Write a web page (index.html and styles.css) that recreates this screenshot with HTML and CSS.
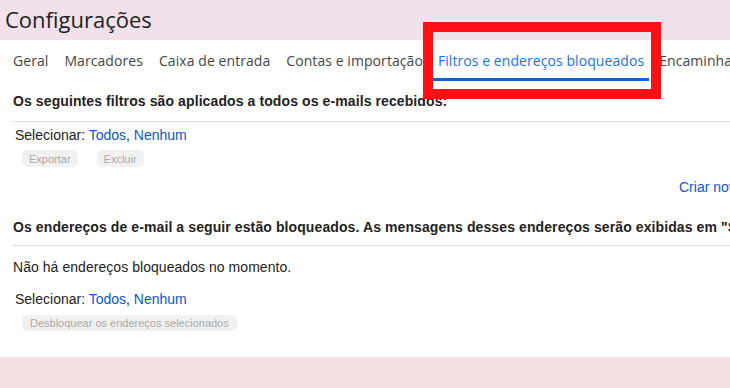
FILE: index.html
```html
<!DOCTYPE html>
<html lang="pt-BR">
<head>
<meta charset="utf-8">
<title>Configurações</title>
<link rel="stylesheet" href="styles.css">
</head>
<body>
<div class="page">
  <header class="topbar">
    <h1 class="title">Configurações</h1>
  </header>
  <main class="panel">
    <nav class="tabs">
      <a class="tab">Geral</a>
      <a class="tab">Marcadores</a>
      <a class="tab">Caixa de entrada</a>
      <a class="tab">Contas e importação</a>
      <a class="tab tab-active">Filtros e endereços bloqueados</a>
      <a class="tab">Encaminhamento e POP/IMAP</a>
    </nav>
    <section class="section">
      <h2 class="sec-title">Os seguintes filtros são aplicados a todos os e-mails recebidos:</h2>
      <div class="select-row">Selecionar: <a class="link">Todos</a>, <a class="link">Nenhum</a></div>
      <div class="btn-row">
        <span class="btn">Exportar</span>
        <span class="btn">Excluir</span>
      </div>
      <div class="create-row"><a class="link">Criar novo filtro</a> &nbsp; <a class="link">Importar filtros</a></div>
    </section>
    <section class="section section-blocked">
      <h2 class="sec-title sec-title-2">Os endereços de e-mail a seguir estão bloqueados. As mensagens desses endereços serão exibidas em "Spam":</h2>
      <p class="empty">Não há endereços bloqueados no momento.</p>
      <div class="select-row select-row-2">Selecionar: <a class="link">Todos</a>, <a class="link">Nenhum</a></div>
      <div class="btn-row btn-row-2">
        <span class="btn">Desbloquear os endereços selecionados</span>
      </div>
    </section>
  </main>
  <footer class="bottom"></footer>
  <div class="highlight"></div>
</div>
</body>
</html>
```

FILE: styles.css
```css
html, body {
  margin: 0;
  padding: 0;
  background: #ffffff;
  overflow: hidden;
}
body {
  width: 730px;
  height: 388px;
  font-family: "Liberation Sans", Arial, sans-serif;
  color: #202124;
}
.page {
  position: relative;
  width: 730px;
  height: 388px;
  overflow: hidden;
}
.topbar {
  height: 40px;
  background: #f0e1eb;
  display: flex;
  align-items: center;
  padding-left: 5px;
}
.title {
  margin: 0;
  font-family: "Open Sans", sans-serif;
  font-weight: 400;
  font-size: 22px;
  line-height: 28px;
  color: #1f1f1f;
  padding-bottom: 3px;
}
.panel {
  height: 317px;
  background: #ffffff;
}
.tabs {
  display: flex;
  height: 41px;
  padding-left: 5px;
  white-space: nowrap;
}
.tab {
  display: flex;
  align-items: center;
  padding: 2px 8px 0;
  font-family: "Open Sans", sans-serif;
  font-size: 14px;
  letter-spacing: 0.07px;
  color: #444746;
  border-bottom: 3px solid transparent;
}
.tab-active {
  color: #1a73e8;
  border-bottom-color: #0b66de;
  padding-left: 7px;
  padding-right: 5px;
  margin-right: 5px;
}
.tab-active + .tab {
  padding-left: 5px;
}
.section {
  padding-left: 13px;
  white-space: nowrap;
}
.sec-title {
  margin: 0;
  padding: 10px 0;
  font-size: 14px;
  line-height: 20px;
  font-weight: 700;
  color: #222;
  border-bottom: 1px solid #dedede;
  letter-spacing: 0.1px;
}
.select-row {
  padding-left: 2px;
  margin-top: 3px;
  font-size: 14px;
  line-height: 20px;
  color: #222;
}
.link {
  color: #0b57d0;
}
.btn-row {
  display: flex;
  gap: 19px;
  margin-top: 5px;
  padding-left: 9px;
}
.btn {
  display: inline-flex;
  align-items: center;
  height: 17px;
  padding: 0 7px;
  background: #f1f1f1;
  border-radius: 5px;
  font-size: 11px;
  color: #a9a9a9;
}
.create-row {
  margin-top: 10px;
  padding-left: 666px;
  font-size: 14px;
  line-height: 20px;
}
.section-blocked {
  padding-top: 10px;
}
.sec-title-2 {
  padding-bottom: 8px;
}
.empty {
  margin: 11px 0 0;
  font-size: 14px;
  line-height: 20px;
  color: #222;
  letter-spacing: 0.05px;
}
.select-row-2 {
  margin-top: 12px;
}
.btn-row-2 {
  margin-top: 6px;
}
.btn-row-2 .btn {
  height: 16px;
  padding: 0 8px;
}
.bottom {
  height: 31px;
  background: #f3e1e3;
}
.highlight {
  position: absolute;
  left: 423px;
  top: 22px;
  width: 218px;
  height: 57px;
  border: 10px solid #fe1013;
}
```
